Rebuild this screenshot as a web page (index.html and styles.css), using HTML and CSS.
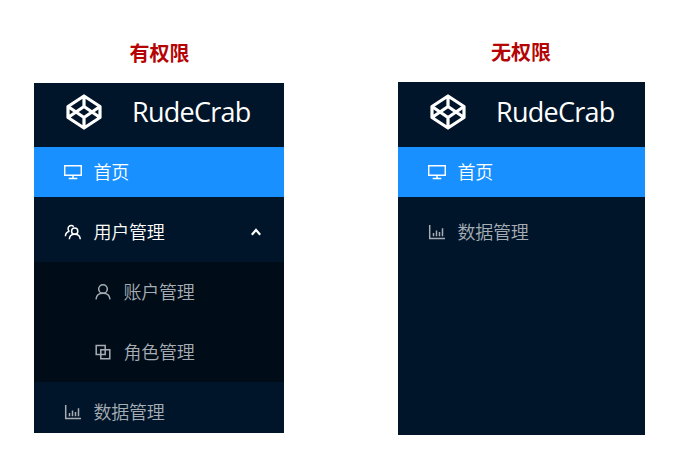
FILE: index.html
```html
<!DOCTYPE html>
<html lang="zh-CN">
<head>
<meta charset="utf-8">
<title>RudeCrab</title>
<link rel="stylesheet" href="styles.css">
</head>
<body>
<svg class="defs" aria-hidden="true">
  <defs>
    <symbol id="logo" viewBox="0 0 36 36"><path d="M18 2 34 12.5V23.5L18 34 2 23.5V12.5ZM18 2V12.5M18 23.5V34M2 12.5 18 23.5 34 12.5M2 23.5 18 12.5 34 23.5"/></symbol>
    <symbol id="desktop" viewBox="0 0 18 18"><path d="M.7 2.7H17.3V12.3H.7ZM9 12.3V15.4M4.7 15.5H13.3"/></symbol>
    <symbol id="team" viewBox="0 0 18 18"><circle cx="10.7" cy="8.2" r="3.1"/><path d="M5.3 16.3C5.5 13 7.6 11.3 10.7 11.3S16.1 13 16.3 16.3M9.7 3.7A3.2 3.2 0 1 0 5.3 8.3M5.5 8.2C3 8.8 1.5 10.5 1.4 13.2"/></symbol>
    <symbol id="user" viewBox="0 0 18 18"><circle cx="9" cy="6" r="4.3"/><path d="M2 16.4C2.3 12.5 4.8 10.3 9 10.3S15.7 12.5 16 16.4"/></symbol>
    <symbol id="roles" viewBox="0 0 18 18"><path d="M2.2 2.5H11.2V11.5H2.2ZM6.8 6.7H15.8V15.7H6.8Z"/></symbol>
    <symbol id="chart" viewBox="0 0 18 18"><path d="M1.7 2V15.5H17M5.5 10V13.3M8.5 7.5V13.3M11.5 9V13.3M14.5 5.3V13.3"/></symbol>
  </defs>
</svg>
<main class="compare">
  <section class="demo demo-full">
    <h2 class="caption">有权限</h2>
    <aside class="sider">
      <header class="brand"><svg class="logo"><use href="#logo"/></svg><span class="name">RudeCrab</span></header>
      <nav class="menu">
        <a class="item active"><svg class="icon"><use href="#desktop"/></svg><span>首页</span></a>
        <a class="item open"><svg class="icon"><use href="#team"/></svg><span>用户管理</span><svg class="arrow" viewBox="0 0 10 8"><path d="M.8 6.7 5 2 9.2 6.7"/></svg></a>
        <div class="submenu">
          <a class="item"><svg class="icon"><use href="#user"/></svg><span>账户管理</span></a>
          <a class="item"><svg class="icon"><use href="#roles"/></svg><span>角色管理</span></a>
        </div>
        <a class="item"><svg class="icon"><use href="#chart"/></svg><span>数据管理</span></a>
      </nav>
    </aside>
  </section>
  <section class="demo demo-limited">
    <h2 class="caption">无权限</h2>
    <aside class="sider">
      <header class="brand"><svg class="logo"><use href="#logo"/></svg><span class="name">RudeCrab</span></header>
      <nav class="menu">
        <a class="item active"><svg class="icon"><use href="#desktop"/></svg><span>首页</span></a>
        <a class="item"><svg class="icon"><use href="#chart"/></svg><span>数据管理</span></a>
      </nav>
    </aside>
  </section>
</main>
</body>
</html>
```
FILE: styles.css
```css
* { box-sizing: border-box; }

body {
  margin: 0;
  background: #fff;
  font-family: "Noto Sans CJK SC", sans-serif;
}

.defs { display: none; }

.compare {
  display: flex;
  gap: 114px;
  height: 464px;
  padding-left: 34px;
  overflow: hidden;
}

.demo-full { width: 250px; padding-top: 38px; }
.demo-limited { width: 247px; padding-top: 37px; }

.caption {
  margin: 0 0 15px;
  color: #b40404;
  font-size: 20px;
  font-weight: 700;
  line-height: 30px;
  text-align: center;
}

.demo-full .caption { padding-left: 1px; }
.demo-limited .caption { padding-right: 1px; }

.sider {
  background: #001529;
  overflow: hidden;
}

.demo-full .sider { height: 350px; }
.demo-limited .sider { height: 353px; }

.brand {
  display: flex;
  align-items: center;
  height: 64px;
  padding: 0 0 6px 32px;
}

.demo-limited .brand { height: 65px; padding-bottom: 5px; }

.logo {
  width: 36px;
  height: 36px;
  margin-right: 30px;
  fill: none;
  stroke: #fff;
  stroke-width: 3.2;
  stroke-linejoin: round;
}

.name {
  color: #fff;
  font-family: "Open Sans", sans-serif;
  font-size: 27px;
  letter-spacing: -0.75px;
  line-height: 40px;
}

.menu { display: flex; flex-direction: column; }

.item {
  display: flex;
  align-items: center;
  height: 50px;
  margin-bottom: 10px;
  padding-left: 30px;
  color: #a6adb4;
  font-size: 18px;
  font-weight: 350;
  letter-spacing: -0.25px;
  line-height: 48px;
}

.item span { height: 50px; margin-left: -0.5px; }

.item.active { background: #1890ff; color: #fff; }
.item.open { margin-bottom: 5px; padding-right: 23px; color: #fff; }

.icon {
  width: 18px;
  height: 18px;
  margin-right: 12px;
  fill: none;
  stroke: currentColor;
  stroke-width: 1.5;
}

.arrow {
  width: 10px;
  height: 8px;
  margin-left: auto;
  fill: none;
  stroke: #fff;
  stroke-width: 2.2;
}

.submenu {
  margin-bottom: -5px;
  padding: 5px 0;
  background: #000c17;
}

.submenu .item { padding-left: 60px; }
.submenu .item:last-child { margin-bottom: 0; }
.submenu + .item { margin-top: 10px; }
```
